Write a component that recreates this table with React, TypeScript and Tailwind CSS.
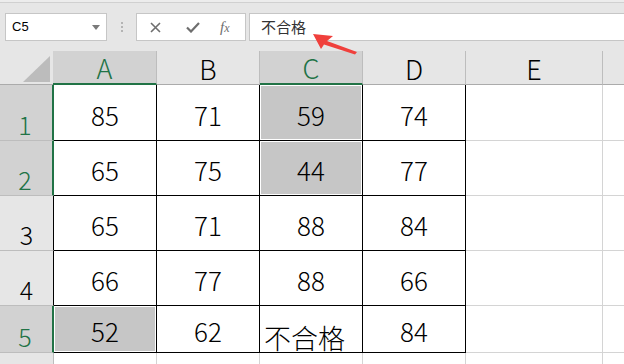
import React from "react";

const FONT = { fontFamily: '"Noto Sans CJK SC", "Noto Sans", sans-serif' };

type Cell = { v: string; sel?: boolean; cjk?: boolean };

const rows: { n: string; sel: boolean; h: string; cells: Cell[] }[] = [
  { n: "1", sel: true, h: "h-[56px]", cells: [{ v: "85" }, { v: "71" }, { v: "59", sel: true }, { v: "74" }] },
  { n: "2", sel: true, h: "h-[55px]", cells: [{ v: "65" }, { v: "75" }, { v: "44", sel: true }, { v: "77" }] },
  { n: "3", sel: false, h: "h-[55px]", cells: [{ v: "65" }, { v: "71" }, { v: "88" }, { v: "84" }] },
  { n: "4", sel: false, h: "h-[55px]", cells: [{ v: "66" }, { v: "77" }, { v: "88" }, { v: "66" }] },
  { n: "5", sel: true, h: "h-[47px]", cells: [{ v: "52", sel: true }, { v: "62" }, { v: "不合格", cjk: true }, { v: "84" }] },
];

const colW = ["w-[103px]", "w-[103px]", "w-[103px]", "w-[103px]"];

function DataCell({ c, w }: { c: Cell; w: string }) {
  return (
    <div className={`${w} h-full shrink-0 border-r border-b border-black bg-white`}>
      {c.sel ? (
        <div className="h-full p-px">
          <div className="flex h-full items-center justify-center bg-[#c6c6c6] pt-[4px] text-[26px] font-light leading-none text-black">
            {c.v}
          </div>
        </div>
      ) : c.cjk ? (
        <div className="flex h-full items-end justify-start pl-[4px] pb-[1px] text-[27px] font-light leading-none text-black">
          {c.v}
        </div>
      ) : (
        <div className="flex h-full items-center justify-center pt-[4px] text-[26px] font-light leading-none text-black">
          {c.v}
        </div>
      )}
    </div>
  );
}

export default function App() {
  return (
    <div className="relative h-[364px] w-[624px] overflow-hidden bg-[#e6e6e6]" style={FONT}>
      {/* top strip */}
      <div className="h-[2px] bg-[#ececec]" />
      <div className="h-px bg-[#d0d0d0]" />
      {/* formula bar */}
      <div className="flex h-[48px] items-start pt-[10px]">
        <div className="ml-[5px] flex h-[28px] w-[102px] items-center justify-between border border-[#c6c6c6] bg-white pl-[6px] pr-[6px]">
          <span className="text-[13px] text-black" style={{ fontFamily: '"Liberation Sans", Arial, sans-serif' }}>C5</span>
          <svg width="8" height="5" viewBox="0 0 8 5"><path d="M0 0h8L4 5z" fill="#7a7a7a" /></svg>
        </div>
        <div className="ml-[14px] flex h-[28px] flex-col items-center justify-center gap-[2px]">
          <span className="h-[2px] w-[2px] bg-[#b4b4b4]" />
          <span className="h-[2px] w-[2px] bg-[#b4b4b4]" />
          <span className="h-[2px] w-[2px] bg-[#b4b4b4]" />
        </div>
        <div className="ml-[13px] flex h-[28px] w-[110px] items-center border border-[#c6c6c6] bg-white">
          <svg className="ml-[13px]" width="11" height="11" viewBox="0 0 11 11">
            <path d="M1 1L10 10M10 1L1 10" stroke="#6e6e6e" strokeWidth="1.6" />
          </svg>
          <svg className="ml-[25px]" width="14" height="11" viewBox="0 0 14 11">
            <path d="M1 5.5L5 9.5L13 1" stroke="#6e6e6e" strokeWidth="2.2" fill="none" />
          </svg>
          <span
            className="ml-[20px] text-[15px] italic leading-none text-[#6e6e6e]"
            style={{ fontFamily: '"Liberation Serif", "Times New Roman", serif' }}
          >
            f<span className="text-[12px]">x</span>
          </span>
        </div>
        <div className="ml-[3px] flex h-[28px] flex-1 items-center border border-r-0 border-[#c6c6c6] bg-white pl-[11px]">
          <span className="text-[15px] text-[#333]">不合格</span>
        </div>
      </div>
      {/* column headers */}
      <div className="flex h-[34px]">
        <div className="relative w-[53px] shrink-0 border-b border-[#ababab]">
          <svg className="absolute left-0 top-0" width="53" height="34" viewBox="0 0 53 34">
            <path d="M23 31H50V5z" fill="#bcbcbc" />
          </svg>
        </div>
        {[
          { l: "A", s: true, w: "w-[104px]" },
          { l: "B", s: false, w: "w-[103px]" },
          { l: "C", s: true, w: "w-[103px]" },
          { l: "D", s: false, w: "w-[103px]" },
          { l: "E", s: false, w: "w-[137px]" },
        ].map((h) => (
          <div
            key={h.l}
            className={`${h.w} flex shrink-0 items-end justify-center border-r border-[#bdbdbd] pb-[2px] text-[27px] font-light leading-none ${
              h.s
                ? "border-b-2 border-b-[#217346] bg-[#d2d2d2] text-[#217346]"
                : "border-b border-b-[#ababab] text-black"
            }`}
          >
            {h.l}
          </div>
        ))}
        <div className="flex-1 border-b border-[#ababab]" />
      </div>
      {/* data rows */}
      {rows.map((r) => (
        <div key={r.n} className={`flex ${r.h}`}>
          <div
            className={`flex w-[54px] shrink-0 items-end justify-center border-b border-b-[#bdbdbd] pb-[3px] text-[25px] font-light leading-none ${
              r.sel
                ? "border-r-2 border-r-[#217346] bg-[#d2d2d2] pr-[2px] text-[#217346]"
                : "border-r border-r-black text-black"
            }`}
          >
            {r.n}
          </div>
          {r.cells.map((c, i) => (
            <DataCell key={i} c={c} w={colW[i]} />
          ))}
          <div className="h-full w-[137px] shrink-0 border-r border-b border-[#d4d4d4] bg-white" />
          <div className="h-full flex-1 border-b border-[#d4d4d4] bg-white" />
        </div>
      ))}
      {/* row 6 partial */}
      <div className="flex h-[20px]">
        <div className="w-[54px] shrink-0 border-r border-[#bdbdbd]" />
        <div className="h-full w-[103px] shrink-0 border-r border-[#d4d4d4] bg-white" />
        <div className="h-full w-[103px] shrink-0 border-r border-[#d4d4d4] bg-white" />
        <div className="h-full w-[103px] shrink-0 border-r border-[#d4d4d4] bg-white" />
        <div className="h-full w-[103px] shrink-0 border-r border-[#d4d4d4] bg-white" />
        <div className="h-full w-[137px] shrink-0 border-r border-[#d4d4d4] bg-white" />
        <div className="h-full flex-1 bg-white" />
      </div>
      {/* red arrow annotation */}
      <svg className="pointer-events-none absolute left-0 top-0" width="624" height="364" viewBox="0 0 624 364">
        <path d="M313 34 L333 36 L327 41 L357 52 L355 54.5 L324 44.5 L321 49 Z" fill="#f0403c" />
      </svg>
    </div>
  );
}
